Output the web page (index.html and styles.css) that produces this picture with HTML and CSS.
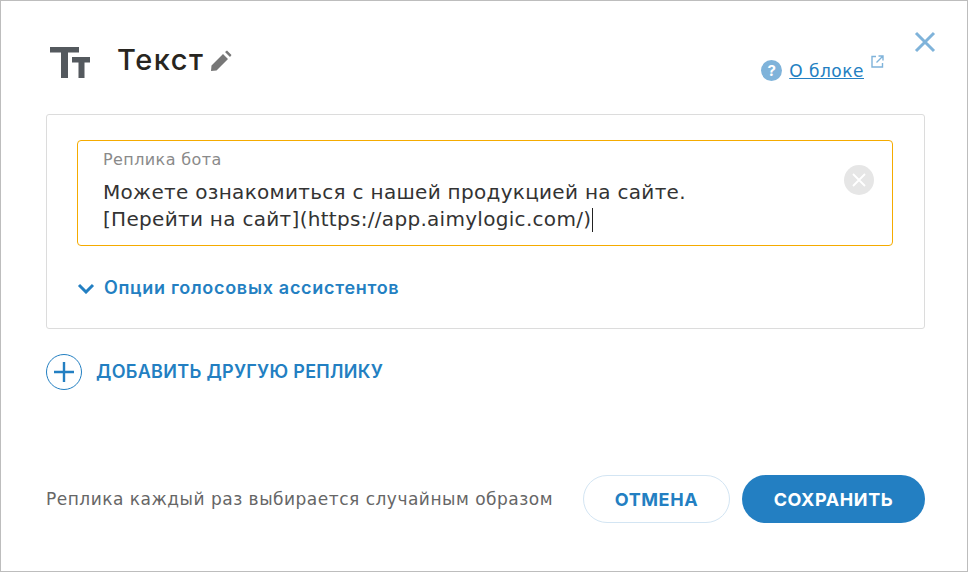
FILE: index.html
```html
<!DOCTYPE html>
<html lang="en">

<head>
    <meta charset="UTF-8">
    <meta name="viewport" content="width=device-width, initial-scale=1.0">
    <title>Текст</title>
    <link rel="stylesheet" href="styles.css">
</head>

<body>
    <div class="modal">
        <button class="close" aria-label="Закрыть">
            <svg width="22" height="22" viewBox="0 0 22 22">
                <path d="M2 2 L20 20 M20 2 L2 20" stroke="#7fb3da" stroke-width="3" fill="none" />
            </svg>
        </button>

        <div class="header">
            <div class="title">
                <svg class="title-icon" width="42" height="34" viewBox="0 0 42 34">
                    <path d="M1 1 H30 V6.5 H19 V32 H12 V6.5 H1 Z" fill="#54595e" />
                    <path d="M23 11 H41 V16.5 H35.5 V32 H29.5 V16.5 H23 Z" fill="#54595e" />
                </svg>
                <span class="title-text">Текст</span>
                <svg class="pencil" width="22" height="22" viewBox="0 0 22 22">
                    <path d="M1 21 L1.5 15.5 L13 4 L18 9 L6.5 20.5 Z M15 2 L17 0.5 L21.5 5 L20 7 Z" fill="#777" />
                </svg>
            </div>
            <div class="about">
                <span class="help">?</span>
                <a class="about-link" href="#">О блоке</a>
                <svg class="ext" width="13" height="13" viewBox="0 0 13 13">
                    <path d="M5 1.5 H1 V12 H11.5 V8 M7.5 1 H12 V5.5 M12 1 L5.5 7.5" stroke="#7fb3da" stroke-width="1.4" fill="none" />
                </svg>
            </div>
        </div>

        <div class="card">
            <div class="field">
                <div class="field-text">
                    <div class="field-label">Реплика бота</div>
                    <div class="field-value">Можете ознакомиться с нашей продукцией на сайте.<br>[Перейти на сайт](https://app.aimylogic.com/)<span class="caret"></span></div>
                </div>
                <span class="clear">
                    <svg width="16" height="16" viewBox="0 0 16 16">
                        <path d="M2 2 L14 14 M14 2 L2 14" stroke="#fff" stroke-width="1.8" fill="none" />
                    </svg>
                </span>
            </div>
            <div class="options">
                <svg width="18" height="11" viewBox="0 0 18 11">
                    <path d="M2 2 L9 9 L16 2" stroke="#237fc2" stroke-width="3" fill="none" />
                </svg>
                <span>Опции голосовых ассистентов</span>
            </div>
        </div>

        <div class="add">
            <span class="add-icon">
                <svg width="22" height="22" viewBox="0 0 22 22">
                    <path d="M11 1 V21 M1 11 H21" stroke="#237fc2" stroke-width="2.4" fill="none" />
                </svg>
            </span>
            <span class="add-text">ДОБАВИТЬ ДРУГУЮ РЕПЛИКУ</span>
        </div>

        <div class="footer">
            <span class="hint">Реплика каждый раз выбирается случайным образом</span>
            <button class="btn btn-cancel">ОТМЕНА</button>
            <button class="btn btn-save">СОХРАНИТЬ</button>
        </div>
    </div>
</body>

</html>
```

FILE: styles.css
```css
* {
    box-sizing: border-box;
}

body {
    margin: 0;
    font-family: "DejaVu Sans", "Noto Sans", sans-serif;
    background-color: #fff;
}

.modal {
    position: relative;
    display: flex;
    flex-direction: column;
    width: 968px;
    height: 572px;
    padding: 0 42px 48px 45px;
    border: 1px solid #bdbdbd;
    overflow: hidden;
}

.close {
    position: absolute;
    top: 30px;
    right: 31px;
    padding: 0;
    border: 0;
    background: none;
    line-height: 0;
}

.header {
    display: flex;
    justify-content: space-between;
    height: 113px;
}

.title {
    display: flex;
    align-items: flex-start;
    padding-top: 44px;
}

.title-icon {
    margin: 1px 0 0 3px;
}

.title-text {
    margin-left: 26px;
    font-family: "Inter", sans-serif;
    font-size: 29px;
    line-height: 30px;
    font-weight: 500;
    letter-spacing: 1.5px;
    color: #282520;
}

.pencil {
    margin: 5px 0 0 6px;
}

.about {
    display: flex;
    align-items: flex-start;
    padding: 58px 41px 0 0;
}

.help {
    width: 21px;
    height: 21px;
    margin-top: 1px;
    border-radius: 50%;
    background-color: #7fb3da;
    color: #fff;
    font-family: "Inter", sans-serif;
    font-size: 15px;
    font-weight: 700;
    line-height: 21px;
    text-align: center;
}

.about-link {
    margin-left: 7px;
    font-size: 17px;
    line-height: 24px;
    letter-spacing: 0.5px;
    color: #237fc2;
}

.ext {
    margin: -4px 0 0 7px;
}

.card {
    height: 215px;
    padding: 25px 31px 0 30px;
    border: 1px solid #dcdcdc;
    border-radius: 3px;
}

.field {
    display: flex;
    justify-content: space-between;
    height: 106px;
    padding: 9px 18px 0 25px;
    border: 1px solid #f5ab00;
    border-radius: 4px;
}

.field-label {
    font-size: 16px;
    line-height: 20px;
    letter-spacing: 0.4px;
    color: #8a8a8a;
}

.field-value {
    margin-top: 9px;
    font-size: 20px;
    line-height: 27px;
    letter-spacing: 0.3px;
    color: #333;
}

.caret {
    display: inline-block;
    width: 1px;
    height: 24px;
    margin-left: 1px;
    background-color: #222;
    vertical-align: -6px;
}

.clear {
    display: flex;
    align-items: center;
    justify-content: center;
    width: 30px;
    height: 30px;
    margin-top: 15px;
    border-radius: 50%;
    background-color: #e6e6e6;
}

.options {
    display: flex;
    align-items: center;
    margin-top: 30px;
    color: #237fc2;
    font-family: "Inter", sans-serif;
    font-size: 18px;
    line-height: 24px;
    font-weight: 600;
    letter-spacing: 0.7px;
}

.options span {
    margin-left: 9px;
}

.add {
    display: flex;
    align-items: center;
    margin-top: 25px;
}

.add-icon {
    display: flex;
    align-items: center;
    justify-content: center;
    width: 36px;
    height: 36px;
    border: 1px solid #237fc2;
    border-radius: 50%;
}

.add-text {
    margin: -2px 0 0 14px;
    color: #237fc2;
    font-family: "Inter", sans-serif;
    font-size: 18px;
    font-weight: 600;
    letter-spacing: 0.3px;
}

.footer {
    display: flex;
    align-items: center;
    margin-top: auto;
}

.hint {
    flex: 1;
    font-size: 17px;
    letter-spacing: 0.5px;
    color: #666;
}

.btn {
    height: 48px;
    border-radius: 24px;
    font-family: "Inter", sans-serif;
    font-size: 18px;
    font-weight: 700;
    letter-spacing: 0.6px;
}

.btn-cancel {
    width: 147px;
    border: 1px solid #d3e5f3;
    background-color: #fff;
    color: #237fc2;
}

.btn-save {
    width: 183px;
    margin-left: 12px;
    border: 0;
    background-color: #237fc2;
    color: #fff;
}
```
